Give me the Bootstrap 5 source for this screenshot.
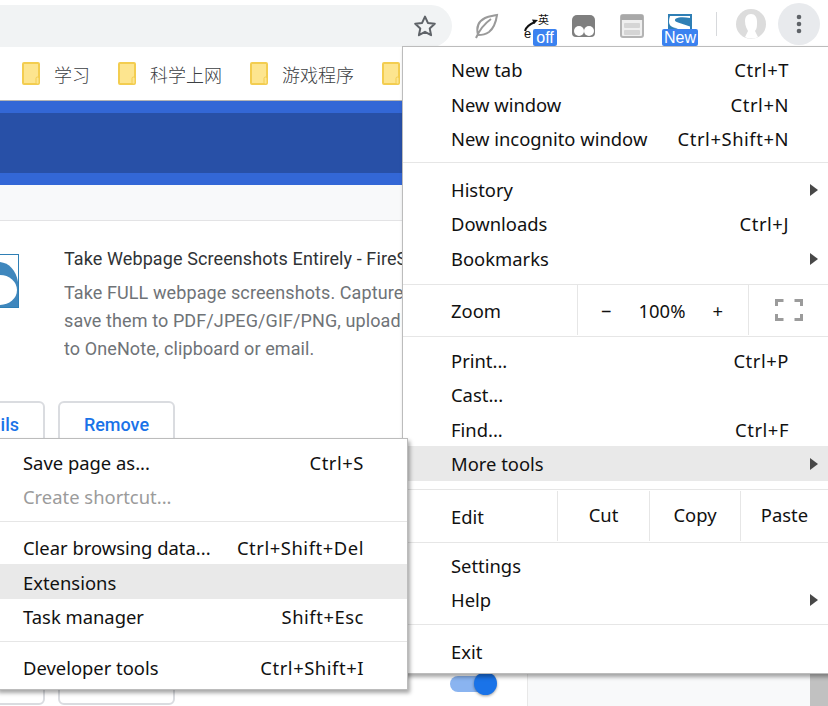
<!DOCTYPE html>
<html lang="en">
<head>
<meta charset="utf-8">
<title>Chrome menu</title>
<link rel="stylesheet" href="https://cdn.jsdelivr.net/npm/bootstrap@5.3.0/dist/css/bootstrap.min.css">
<style>
html,body{margin:0;height:706px;overflow:hidden;background:#fff}
.stage{width:828px;height:706px;overflow:hidden;font-family:"Noto Sans","Liberation Sans",sans-serif}
.tbar{height:47px;background:#fff}
.omni{width:452px;height:42px;margin-top:5px;background:#f1f3f4;border-radius:0 21px 21px 0;padding-right:15px;flex:none}
.tool-ico{flex:none;display:block}
.tool-slot{position:relative;width:48px;height:47px;flex:none}
.tool-strip{padding-left:11px}
.tool-slot svg{position:absolute;left:0;top:0}
.tag{position:absolute;background:#3b82f0;color:#fff;font:16px/17px "Liberation Sans",sans-serif;border-radius:2px;text-align:center;top:29px}
.tag-off{left:22px;width:24px}
.tag-new{left:7px;width:36px}
.vsep{width:1px;height:24px;background:#d7d9dc;flex:none;margin:0 19px 0 13px}
.kebab{width:42px;height:42px;border-radius:50%;background:#e8eaed;flex:none;margin-left:12px}
.bmarks{height:54px;padding-left:22px;background:#fff;border-bottom:1px solid #b4b4b4;font:18px/1 "Noto Sans CJK SC",sans-serif;color:#3c4043;font-weight:300;gap:28px}
.bm-item{gap:14px;white-space:nowrap}
.band{height:84px;background:#3367d6;padding:12px 0}
.band-in{height:60px;background:#2850a7}
.strip{height:36px;background:#f8f9fa;border-bottom:1px solid #e3e3e5}
.ext-body{height:485px;position:relative;background:#fff}
.ext-row{padding:26px 0 0 0;font-family:Roboto,sans-serif}
.ext-logo{width:19px;height:54px;flex:none;margin:7px 45px 0 0;display:block}
.ext-title{font-size:18px;line-height:24px;color:#303336;white-space:nowrap;letter-spacing:.1px}
.ext-desc{font-size:18px;line-height:28px;color:#6f7377;white-space:nowrap;margin-top:8px;letter-spacing:.1px}
.ext-clip{width:338px;overflow:hidden}
.ext-btns{gap:13px;margin-top:38px;margin-left:-55px;font-family:Roboto,sans-serif}
.ext-btns-next{margin-top:184px}
.ext-btn{height:60px;border:2px solid #dadce0;border-radius:6px;color:#1a73e8;font-weight:500;font-size:18px;line-height:20px;padding:12px 0 0;text-align:center;background:#fff}
.ext-btn:hover{color:#1a73e8}
.b-a{width:100px;text-align:right;padding-right:24px}
.b-b{width:117px}
.pop{position:absolute;background:#fff;color:#111;font-size:18.4px;line-height:34px;border:1px solid #bcbcbc;box-shadow:2px 3px 4px rgba(0,0,0,.35)}
.pop-main{left:402px;top:46px;width:430px;height:628px;padding-top:7px;z-index:2}
.pop-sub{left:-4px;top:438px;width:412px;height:252px;padding-top:7.8px;z-index:3}
.mrow{height:34.4px;padding:0 42px 2px 48px;white-space:nowrap;position:relative}
.pop-sub .mrow{padding:0 43px 2px 26px}
.key{letter-spacing:.55px}
.mrow.hot{background:#e9e9e9}
.pop-main .mrow.hot{margin-top:-1.6px;margin-bottom:1.6px;padding-top:1px;padding-bottom:0}
.pop-sub .mrow.hot{margin-top:-2.6px;height:35px;margin-bottom:2px;padding-top:4px;padding-bottom:0}
.mrow.off{color:#9b9b9b}
.msep{height:1px;background:#e6e6e6}
.s1{margin:4.8px 0 10.8px}
.s2{margin:7px 0 0}
.s3{margin:0 0 7.8px}
.s4{margin:8.2px 0 0}
.s5{margin:0 0 6.8px}
.s6{margin:5.4px 0 10.8px}
.t1{margin:5.4px 0 9.8px}
.t2{margin:6px 0 9.8px}
.arrow{position:absolute;right:13px;top:10px;width:0;height:0;border-left:8px solid #484848;border-top:6px solid transparent;border-bottom:6px solid transparent}
.hot .arrow{top:12px}
.seg-row{padding-left:48px}
.seg-z{height:51px}
.seg-e{height:52px}
.seg{height:50px;border-left:1px solid #e6e6e6;text-align:center}
.seg-label{width:126px;padding-top:2px}
.seg-label-e{width:106px;padding-top:2px}
.zoom-seg{width:171px;padding:2px 25px 0 23px}
.full-seg{width:80px}
.cut-seg{width:92px}.copy-seg{width:91px}.paste-seg{width:88px}
.seg-txt{padding-bottom:2px}
.toggle{position:absolute;left:450px;top:672px;width:47px;height:23px;z-index:1}
.toggle-track{position:absolute;left:0;top:4px;width:42px;height:16px;border-radius:8px;background:#8ab4f0}
.toggle-knob{position:absolute;right:0;top:0;width:23px;height:23px;border-radius:50%;background:#1a73e8;box-shadow:0 1px 3px rgba(0,0,0,.4)}
.rail{position:absolute;left:527px;top:221px;width:283px;height:485px;background:#f8f9fa;border-left:1px solid #e8e8e8}
.sbar{position:absolute;left:810px;top:221px;width:18px;height:485px;background:#c1c1c1}
</style>
</head>
<body>
<div class="stage position-relative">
  <div class="tbar d-flex align-items-start">
    <div class="omni d-flex justify-content-end align-items-center">
      <svg class="tool-ico" width="24" height="24" viewBox="0 0 24 24"><path d="M12 2.6l2.9 6.3 6.9.8-5.1 4.7 1.4 6.8-6.1-3.4-6.1 3.4 1.4-6.8-5.1-4.7 6.9-.8z" fill="none" stroke="#5f6368" stroke-width="2" stroke-linejoin="round"/></svg>
    </div>
    <div class="tool-strip d-flex align-items-center flex-grow-1">
      <div class="tool-slot">
        <svg width="48" height="47" viewBox="0 0 48 47"><path d="M15 35c-2-8 1-14 7-17 4-2 8-2 12-3-1 7-3 13-8 17-3 2-7 3-11 3zM13 38c3-7 8-14 15-19" fill="none" stroke="#9a9a9a" stroke-width="2"/></svg>
      </div>
      <div class="tool-slot">
        <svg width="48" height="47" viewBox="0 0 48 47"><path d="M14 31c1-4 5-7 10-9" fill="none" stroke="#111" stroke-width="2"/><path d="M27 20l-6-.5 2 4.500z" fill="#111"/><text x="27" y="24" font-size="11" font-family="'Noto Sans CJK SC',sans-serif" fill="#111">英</text><text x="13" y="38" font-size="13" font-family="'Liberation Sans',sans-serif" fill="#111">e</text></svg>
        <span class="tag tag-off">off</span>
      </div>
      <div class="tool-slot">
        <svg width="48" height="47" viewBox="0 0 48 47"><path d="M18 15h13a5 5 0 0 1 5 5v13a4 4 0 0 1-4 4H17a4 4 0 0 1-4-4V20a5 5 0 0 1 5-5z" fill="#7f7f7f"/><circle cx="20" cy="31" r="5" fill="#fff"/><circle cx="30" cy="31" r="5" fill="#fff"/></svg>
      </div>
      <div class="tool-slot">
        <svg width="48" height="47" viewBox="0 0 48 47"><rect x="14" y="15" width="22" height="22" rx="2" fill="#efefef" stroke="#b4b4b4" stroke-width="2"/><rect x="14" y="15" width="22" height="5" fill="#a8a8a8"/><rect x="17" y="23" width="16" height="5" rx="1" fill="#d5d5d5"/><rect x="17" y="30" width="16" height="5" rx="1" fill="#d5d5d5"/></svg>
      </div>
      <div class="tool-slot">
        <svg width="48" height="47" viewBox="0 0 48 47"><rect x="13" y="14" width="24" height="18" fill="#2f7fb5"/><path d="M15 16h20v2c-6-1-11-1-14 .5-2 1.500-1 3 2 4l12 4v5H15v-2l8-1c-5-1-9-2-9-7 0-3 1-5 1-5.500z" fill="#fff"/></svg>
        <span class="tag tag-new">New</span>
      </div>
      <div class="vsep"></div>
      <svg class="tool-ico" width="30" height="30" viewBox="0 0 30 30"><circle cx="15" cy="15" r="15" fill="#dcdcdc"/><path d="M15 5c-4 0-6 3-6 7 0 5 2 8 3 10l-3 6c4 2 9 2 13 0l-3-6c2-2 2-5 2-9 0-5-2-8-6-8z" fill="#fff"/></svg>
      <div class="kebab d-flex align-items-center justify-content-center">
        <svg class="tool-ico" width="6" height="22" viewBox="0 0 6 22"><circle cx="3" cy="4" r="2.3" fill="#5f6368"/><circle cx="3" cy="11" r="2.3" fill="#5f6368"/><circle cx="3" cy="18" r="2.3" fill="#5f6368"/></svg>
      </div>
    </div>
  </div>

  <div class="bmarks d-flex align-items-center">
    <div class="bm-item d-flex align-items-center"><svg width="18" height="23" viewBox="0 0 18 23"><rect x="1" y="1" width="16" height="21" rx="1" fill="#fde58f" stroke="#f3cd50" stroke-width="2"/><rect x="14" y="15" width="3" height="7" rx="1.5" fill="#fde58f" stroke="#f3cd50"/></svg><span>学习</span></div>
    <div class="bm-item d-flex align-items-center"><svg width="18" height="23" viewBox="0 0 18 23"><rect x="1" y="1" width="16" height="21" rx="1" fill="#fde58f" stroke="#f3cd50" stroke-width="2"/><rect x="14" y="15" width="3" height="7" rx="1.5" fill="#fde58f" stroke="#f3cd50"/></svg><span>科学上网</span></div>
    <div class="bm-item d-flex align-items-center"><svg width="18" height="23" viewBox="0 0 18 23"><rect x="1" y="1" width="16" height="21" rx="1" fill="#fde58f" stroke="#f3cd50" stroke-width="2"/><rect x="14" y="15" width="3" height="7" rx="1.5" fill="#fde58f" stroke="#f3cd50"/></svg><span>游戏程序</span></div>
    <div class="bm-item d-flex align-items-center"><svg width="18" height="23" viewBox="0 0 18 23"><rect x="1" y="1" width="16" height="21" rx="1" fill="#fde58f" stroke="#f3cd50" stroke-width="2"/><rect x="14" y="15" width="3" height="7" rx="1.5" fill="#fde58f" stroke="#f3cd50"/></svg></div>
  </div>

  <div class="band"><div class="band-in"></div></div>
  <div class="strip"></div>

  <div class="ext-body">
    <div class="ext-row d-flex">
      <svg class="ext-logo" viewBox="0 0 19 54"><rect x="-2" y=".5" width="20.500" height="53" fill="#fff" stroke="#2f7fb5"/><path d="M0 8c9 1 16 8 18 20v25H0z" fill="#3f87bd"/><ellipse cx="0" cy="36" rx="17" ry="15" fill="#fff"/></svg>
      <div class="ext-clip">
        <div class="ext-title">Take Webpage Screenshots Entirely - FireShot</div>
        <div class="ext-desc">Take FULL webpage screenshots. Capture<br>save them to PDF/JPEG/GIF/PNG, upload<br>to OneNote, clipboard or email.</div>
      </div>
    </div>
    <div class="ext-btns d-flex">
      <a class="ext-btn b-a text-decoration-none" href="#">Details</a>
      <a class="ext-btn b-b text-decoration-none" href="#">Remove</a>
    </div>
    <div class="ext-btns ext-btns-next d-flex">
      <span class="ext-btn b-a"></span>
      <span class="ext-btn b-b"></span>
    </div>
  </div>

  <div class="rail"></div>
  <div class="sbar"></div>
  <div class="toggle"><div class="toggle-track"></div><div class="toggle-knob"></div></div>

  <div class="pop pop-main">
    <div class="mrow d-flex justify-content-between align-items-center"><span>New tab</span><span class="key">Ctrl+T</span></div>
    <div class="mrow d-flex justify-content-between align-items-center"><span>New window</span><span class="key">Ctrl+N</span></div>
    <div class="mrow d-flex justify-content-between align-items-center"><span>New incognito window</span><span class="key">Ctrl+Shift+N</span></div>
    <div class="msep s1"></div>
    <div class="mrow d-flex justify-content-between align-items-center"><span>History</span><i class="arrow"></i></div>
    <div class="mrow d-flex justify-content-between align-items-center"><span>Downloads</span><span class="key">Ctrl+J</span></div>
    <div class="mrow d-flex justify-content-between align-items-center"><span>Bookmarks</span><i class="arrow"></i></div>
    <div class="msep s2"></div>
    <div class="seg-row seg-z d-flex align-items-center">
      <div class="seg-label">Zoom</div>
      <div class="seg zoom-seg d-flex align-items-center justify-content-between"><span>−</span><span>100%</span><span>+</span></div>
      <div class="seg full-seg d-flex align-items-center justify-content-center"><svg width="28" height="22" viewBox="0 0 28 22"><path d="M1.500 7V1.500h7M19.500 1.500h7V7M26.500 15v5.500h-7M8.500 20.500h-7V15" fill="none" stroke="#9b9b9b" stroke-width="3"/></svg></div>
    </div>
    <div class="msep s3"></div>
    <div class="mrow d-flex justify-content-between align-items-center"><span>Print...</span><span class="key">Ctrl+P</span></div>
    <div class="mrow d-flex justify-content-between align-items-center"><span>Cast...</span></div>
    <div class="mrow d-flex justify-content-between align-items-center"><span>Find...</span><span class="key">Ctrl+F</span></div>
    <div class="mrow hot d-flex justify-content-between align-items-center"><span>More tools</span><i class="arrow"></i></div>
    <div class="msep s4"></div>
    <div class="seg-row seg-e d-flex align-items-center">
      <div class="seg-label-e">Edit</div>
      <div class="seg cut-seg d-flex align-items-center justify-content-center"><span class="seg-txt">Cut</span></div>
      <div class="seg copy-seg d-flex align-items-center justify-content-center"><span class="seg-txt">Copy</span></div>
      <div class="seg paste-seg d-flex align-items-center justify-content-center"><span class="seg-txt">Paste</span></div>
    </div>
    <div class="msep s5"></div>
    <div class="mrow d-flex justify-content-between align-items-center"><span>Settings</span></div>
    <div class="mrow d-flex justify-content-between align-items-center"><span>Help</span><i class="arrow"></i></div>
    <div class="msep s6"></div>
    <div class="mrow d-flex justify-content-between align-items-center"><span>Exit</span></div>
  </div>

  <div class="pop pop-sub">
    <div class="mrow d-flex justify-content-between align-items-center"><span>Save page as...</span><span class="key">Ctrl+S</span></div>
    <div class="mrow off d-flex justify-content-between align-items-center"><span>Create shortcut...</span></div>
    <div class="msep t1"></div>
    <div class="mrow d-flex justify-content-between align-items-center"><span>Clear browsing data...</span><span class="key">Ctrl+Shift+Del</span></div>
    <div class="mrow hot d-flex justify-content-between align-items-center"><span>Extensions</span></div>
    <div class="mrow d-flex justify-content-between align-items-center"><span>Task manager</span><span class="key">Shift+Esc</span></div>
    <div class="msep t2"></div>
    <div class="mrow d-flex justify-content-between align-items-center"><span>Developer tools</span><span class="key">Ctrl+Shift+I</span></div>
  </div>
</div>
<script src="https://cdn.jsdelivr.net/npm/bootstrap@5.3.0/dist/js/bootstrap.bundle.min.js"></script>
</body>
</html>
